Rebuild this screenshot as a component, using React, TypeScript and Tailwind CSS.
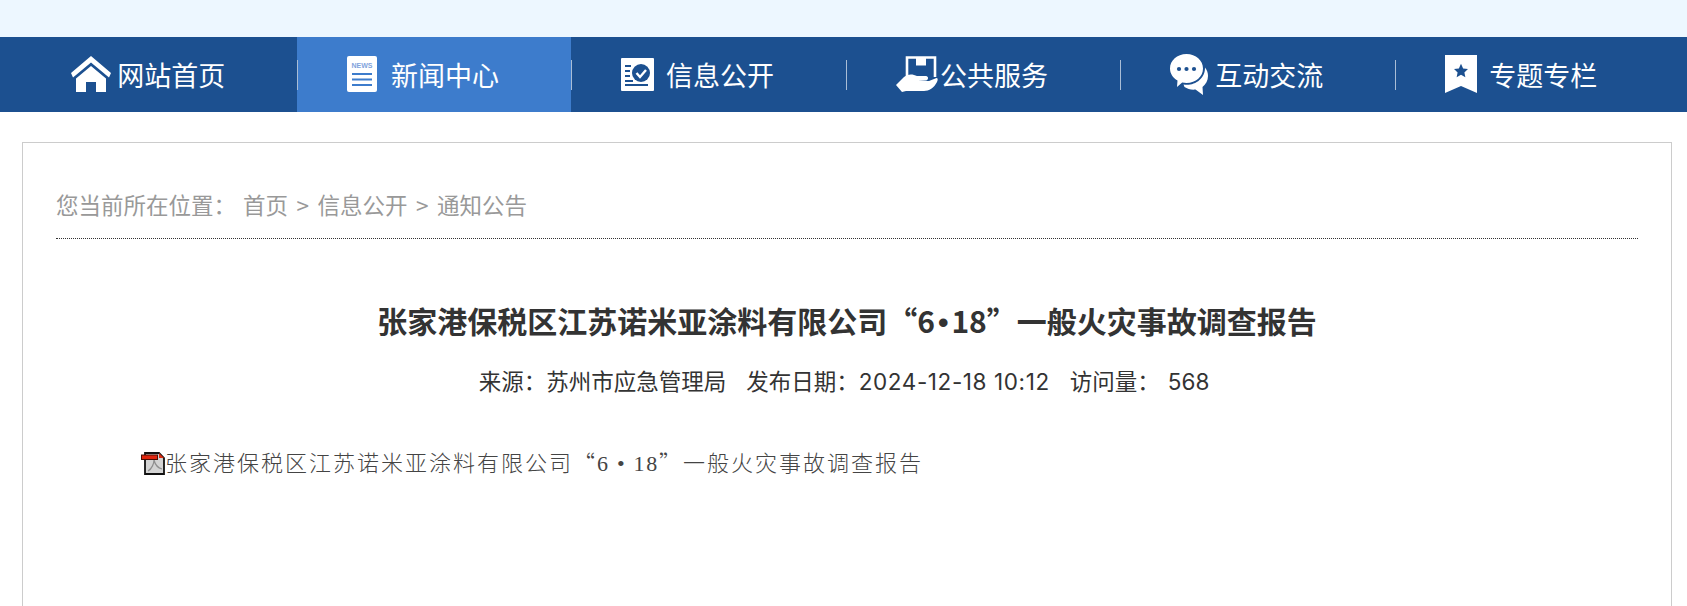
import type { ReactNode } from 'react';

const HomeIcon = () => (
  <svg width="40" height="36" viewBox="0 0 40 36" fill="white">
    <path d="M20 0 L40 17 L38 21.5 L20 6.5 L2 21.5 L0 17 Z" />
    <path d="M20 10 L35 22.5 V36 H25 V26 H15 V36 H5 V22.5 Z" />
  </svg>
);

const NewsIcon = () => (
  <svg width="30" height="36" viewBox="0 0 30 36">
    <rect width="30" height="36" rx="2" fill="white" />
    <text x="15" y="12" textAnchor="middle" fontSize="7" fontWeight="700" fontFamily="Liberation Sans, sans-serif" fill="#7fa3dc">NEWS</text>
    <path d="M5 18h20M5 23.500h20M5 29h20" stroke="#3d7ccc" strokeWidth="2" />
  </svg>
);

const InfoIcon = () => (
  <svg width="33" height="33" viewBox="0 0 33 33">
    <rect width="33" height="33" rx="1" fill="white" />
    <path d="M4 8h6M4 13h5M4 18h5M4 23h8M4 27h23" stroke="#1c5090" strokeWidth="2.2" />
    <circle cx="20" cy="15" r="9" fill="#1c5090" />
    <path d="M15.5 15l3.5 4 6-7" stroke="white" strokeWidth="2.4" fill="none" />
  </svg>
);

const ServiceIcon = () => (
  <svg width="42" height="36" viewBox="0 0 42 36">
    <path d="M11 21V1.5H39V21" fill="none" stroke="white" strokeWidth="2.6" />
    <path d="M20 1.5h10v8H20z" fill="white" />
    <path d="M0 29 L8 21 C12 17.5 17 18 21 20 L30 20 C32.5 20 33 24 30 24.5 L22 25 L33 25 L40.5 22 C42 22 42 24 41 26 C38 32 33 35 28 35 L10 35 L6 36 Z" fill="white" />
  </svg>
);

const ChatIcon = () => (
  <svg width="38" height="41" viewBox="0 0 38 41">
    <path d="M16.5 0C26 0 33 6.5 33 14.5S26 29 16.5 29c-1.5 0-3-.2-4.300-.5L7 33l.5-6.500C3 24 0 19.500 0 14.500 0 6.500 7 0 16.500 0Z" fill="white" />
    <circle cx="9" cy="15" r="2.100" fill="#1c5090" />
    <circle cx="16.500" cy="15" r="2.100" fill="#1c5090" />
    <circle cx="24" cy="15" r="2.100" fill="#1c5090" />
    <path d="M35 13.500C37 16 38 19 38 22c0 4.500-2.200 8.500-5.500 11l.5 8-7.500-5.500c-4 .5-8-.5-11-2.500l-1-2.500c10 2 22-5 21.500-17.500Z" fill="white" />
  </svg>
);

const TopicIcon = () => (
  <svg width="32" height="38" viewBox="0 0 33 39">
    <path d="M0 0H33V39L16.500 32L0 39Z" fill="white" />
    <path d="M16.500 9l2.200 4.700 5 .7-3.700 3.500 1 5-4.500-2.500-4.500 2.500 1-5-3.700-3.500 5-.7Z" fill="#1c5090" />
  </svg>
);

const PdfIcon = () => (
  <svg width="24" height="25" viewBox="0 0 24 25" className="shrink-0">
    <path d="M4 3H18L23 8V24H4Z" fill="#d4d4d4" stroke="#111" strokeWidth="1.800" />
    <path d="M7 21C11 19 13 13 13 10C14 14 17 18 21 19" fill="none" stroke="#8f8f8f" strokeWidth="1.200" />
    <rect x="0.500" y="5" width="16" height="4.500" fill="#e0260f" stroke="#4a0d04" strokeWidth="1" />
    <path d="M18 3L23 8H18Z" fill="#d92b12" />
  </svg>
);

const navItems: { label: string; icon: ReactNode; gap: string; active?: boolean }[] = [
  { label: '网站首页', icon: <HomeIcon />, gap: 'gap-[6px]' },
  { label: '新闻中心', icon: <NewsIcon />, gap: 'gap-[14px]', active: true },
  { label: '信息公开', icon: <InfoIcon />, gap: 'gap-[12px]' },
  { label: '公共服务', icon: <ServiceIcon />, gap: 'gap-[2px]' },
  { label: '互动交流', icon: <ChatIcon />, gap: 'gap-[7px]' },
  { label: '专题专栏', icon: <TopicIcon />, gap: 'gap-[12px]' },
];

export default function App() {
  return (
    <div className="h-[606px] overflow-hidden bg-white font-['Noto_Sans_CJK_SC','Liberation_Sans',sans-serif]">
      <div className="h-[37px] bg-[#edf7ff]" />

      <nav className="h-[75px] bg-[#1c5090]">
        <ul className="ml-[22px] flex h-full w-[1650px]">
          {navItems.map((item, i) => (
            <li
              key={item.label}
              className={`relative flex w-[274.6px] items-center justify-center pb-px pr-[22px] text-[27px] text-white ${item.gap} ${item.active ? 'bg-[#3d7ccc]' : ''}`}
            >
              {item.icon}
              <span className="leading-none">{item.label}</span>
              {i > 0 && (
                <span className="absolute left-0 top-[23px] h-[30px] w-px bg-[#a9bdd6]" />
              )}
            </li>
          ))}
        </ul>
      </nav>

      <main className="ml-[22px] mt-[30px] h-[600px] w-[1650px] border border-[#ccc] px-[33px]">
        <div className="flex h-[96px] items-end gap-[8.5px] border-b border-dotted border-[#333] pb-[18px] text-[22.5px] leading-[32px] text-[#999]">
          <span className="mr-[-1.500px]">您当前所在位置：</span>
          <span>首页</span>
          <span>&gt;</span>
          <span>信息公开</span>
          <span>&gt;</span>
          <span>通知公告</span>
        </div>

        <h1 className="mt-[61px] text-center text-[30px] font-bold leading-[40px] text-[#333]">
          张家港保税区江苏诺米亚涂料有限公司“6
          <span className="mx-[3px] font-['Liberation_Sans',sans-serif]">•</span>
          18”一般火灾事故调查报告
        </h1>

        <div className="mt-[21px] flex justify-center gap-[20px] pr-[6px] text-[22.5px] leading-[32px] text-[#333]">
          <span>来源：苏州市应急管理局</span>
          <span>
            发布日期：<span className="font-['Inter',sans-serif] tracking-[0.6px]">2024-12-18 10:12</span>
          </span>
          <span>
            访问量：<span className="ml-[8px] font-['Inter',sans-serif]">568</span>
          </span>
        </div>

        <p className="ml-[85px] mt-[47px] flex items-center text-[22px] font-light leading-[32px] tracking-[2px] text-[#444]">
          <PdfIcon />
          <span>
            张家港保税区江苏诺米亚涂料有限公司“<span className="font-['Liberation_Serif',serif] tracking-[1.700px]">6 • 18</span>”一般火灾事故调查报告
          </span>
        </p>
      </main>
    </div>
  );
}
